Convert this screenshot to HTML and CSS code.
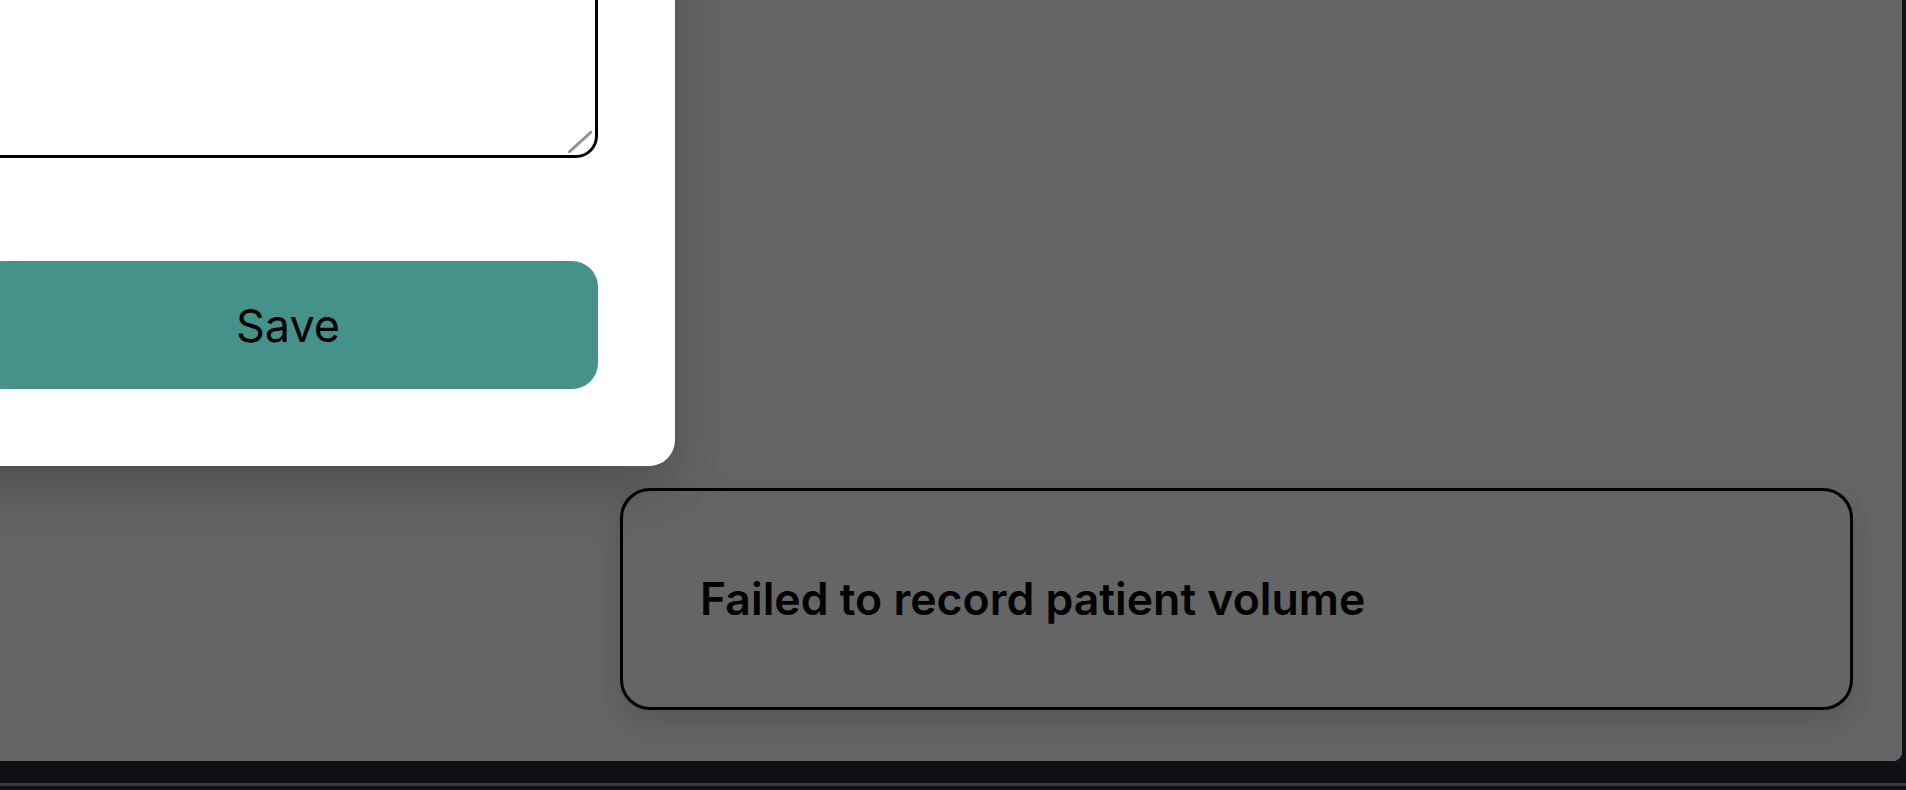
FILE: index.html
```html
<!DOCTYPE html>
<html lang="en">
<head>
<meta charset="utf-8">
<title>Record patient volume</title>
<link rel="stylesheet" href="styles.css">
</head>
<body>
<div class="frame">
  <main class="screen">
    <div class="backdrop"></div>
    <section class="modal">
      <form class="modal-form">
        <div class="notes-wrap">
          <textarea class="notes" aria-label="Notes"></textarea>
          <svg class="resizer" viewBox="0 0 26 24" aria-hidden="true">
            <line x1="2" y1="22" x2="24" y2="2" stroke="#8c8c8c" stroke-width="2.4" stroke-linecap="round"/>
            <line x1="3.5" y1="23" x2="25" y2="3.5" stroke="#d0d0d0" stroke-width="1" stroke-linecap="round"/>
          </svg>
        </div>
        <button type="button" class="save-btn">Save</button>
      </form>
    </section>
    <div class="toast" role="alert">
      <p class="toast-text">Failed to record patient volume</p>
    </div>
  </main>
  <div class="bottom-bar"></div>
  <div class="bottom-line"></div>
</div>
</body>
</html>
```
FILE: styles.css
```css
* { box-sizing: border-box; }

html, body {
  margin: 0;
  padding: 0;
  height: 100%;
  background: #111217;
  overflow: hidden;
  font-family: "Inter", "Noto Sans", sans-serif;
}

.frame {
  display: flex;
  flex-direction: column;
  width: 100%;
  height: 790px;
}

.screen {
  position: relative;
  width: 1902px;
  height: 761px;
  background: #ffffff;
  border-bottom-right-radius: 9px;
  overflow: hidden;
  flex: none;
}

.backdrop {
  position: absolute;
  inset: 0;
  background: rgba(0, 0, 0, 0.605);
}

.modal {
  position: absolute;
  left: -99px;
  top: -300px;
  width: 774px;
  height: 766px;
  background: #ffffff;
  border-radius: 26px;
  box-shadow: 0 20px 60px rgba(0, 0, 0, 0.22);
  padding: 0 77px 77px 77px;
  display: flex;
  flex-direction: column;
  justify-content: flex-end;
}

.modal-form {
  display: flex;
  flex-direction: column;
  gap: 103px;
}

.notes-wrap {
  position: relative;
}

.notes {
  display: block;
  width: 100%;
  height: 300px;
  border: 3px solid #000;
  border-radius: 22px;
  background: #fff;
  resize: none;
  font: inherit;
}

.resizer {
  position: absolute;
  right: 5px;
  bottom: 4px;
  width: 26px;
  height: 24px;
}

.save-btn {
  display: block;
  width: 100%;
  height: 128px;
  border: none;
  border-radius: 26px;
  background: #45928a;
  color: #000;
  font-family: "Inter", "Noto Sans", sans-serif;
  font-size: 45px;
  font-weight: 400;
  cursor: pointer;
}

.toast {
  position: absolute;
  right: 49px;
  bottom: 51px;
  width: 1233px;
  height: 222px;
  border: 3px solid #000;
  border-radius: 30px;
  display: flex;
  align-items: center;
  padding: 0 77px;
  box-shadow: 0 12px 30px rgba(0, 0, 0, 0.14);
}

.toast-text {
  margin: 0;
  font-size: 44.6px;
  font-weight: 600;
  color: #000;
}

.bottom-bar {
  height: 22px;
  background: #0f1015;
  flex: none;
}

.bottom-line {
  height: 3px;
  background: #3a3b40;
  flex: none;
}
```
